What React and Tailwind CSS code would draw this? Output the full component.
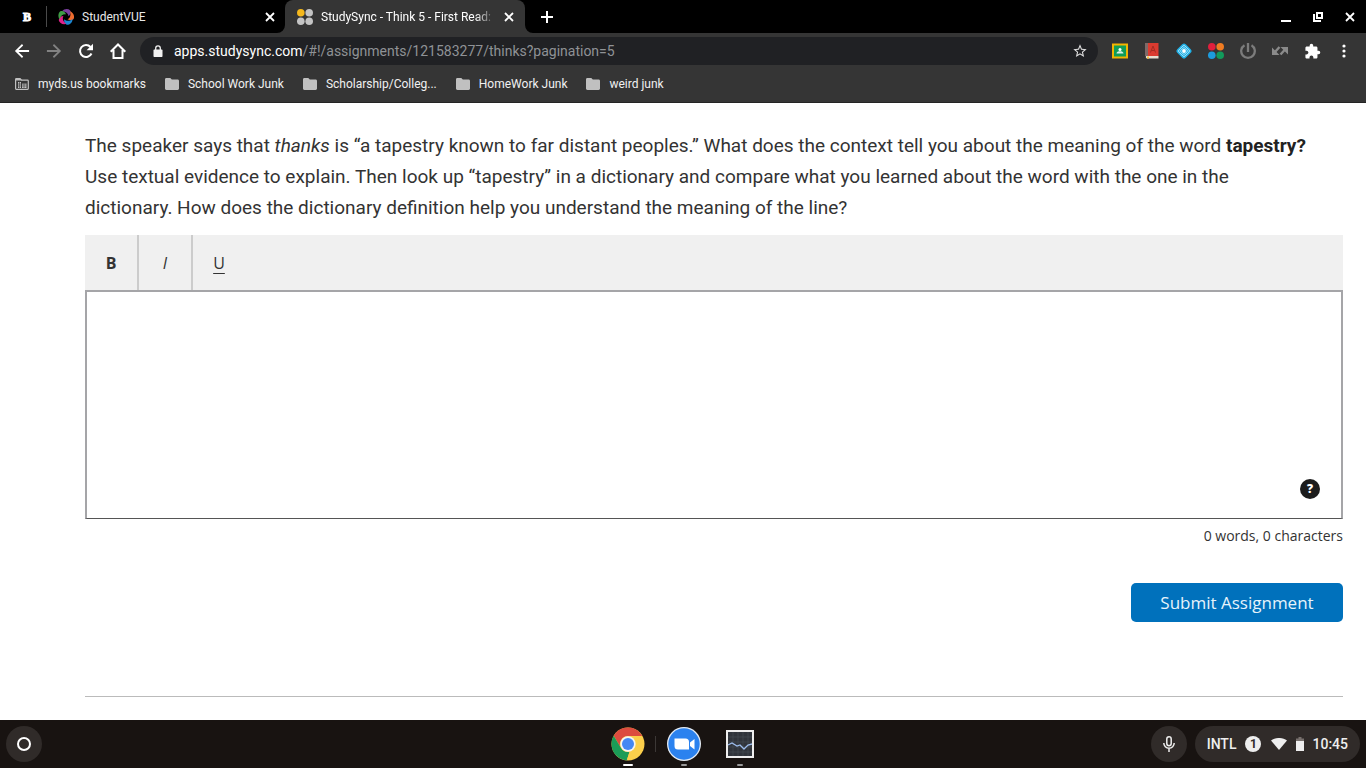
import React, { useState } from "react";

const bookmarks = [
  "School Work Junk",
  "Scholarship/Colleg...",
  "HomeWork Junk",
  "weird junk",
];

const MaterialIcon = ({ d, className = "size-5" }) => (
  <svg viewBox="0 0 24 24" fill="currentColor" className={className}>
    <path d={d} />
  </svg>
);

const CloseIcon = () => (
  <svg viewBox="0 0 10 10" className="size-2.5" stroke="currentColor" strokeWidth="1.8">
    <path d="M1 1l8 8M9 1l-8 8" />
  </svg>
);

const FourDots = ({ colors }) => (
  <svg viewBox="0 0 16 16" className="size-4 shrink-0">
    <circle cx="3.8" cy="3.8" r="3.8" fill={colors[0]} />
    <circle cx="12.2" cy="3.8" r="3.8" fill={colors[1]} />
    <circle cx="3.8" cy="12.2" r="3.8" fill={colors[2]} />
    <circle cx="12.2" cy="12.2" r="3.8" fill={colors[3]} />
  </svg>
);

const StudentVueIcon = () => (
  <svg viewBox="0 0 16 16" className="size-4 shrink-0">
    {["#7b3fa0", "#ef6c2f", "#1c86d1", "#e0218a", "#3f9c46"].map((color, i) => (
      <path
        key={color}
        d="M3.800 2.600C6-.4 10-.6 12 1.200 13.400 3.200 12.600 5.600 10.600 7.200 10.200 4.200 7.500 2.400 3.800 2.600z"
        fill={color}
        transform={`rotate(${i * 72} 8 8)`}
      />
    ))}
  </svg>
);

const FolderIcon = () => (
  <svg viewBox="0 0 14 12" className="h-3 w-3.5 shrink-0" fill="#c0c0c0">
    <path d="M1.400 0h3.900l1.500 1.500h5.800c.8 0 1.400.6 1.400 1.400v7.700c0 .8-.6 1.400-1.400 1.400H1.400C.6 12 0 11.400 0 10.600V1.400C0 .6.600 0 1.400 0z" />
  </svg>
);

const ManagedFolderIcon = () => (
  <svg viewBox="0 0 14 12" className="h-3 w-3.5 shrink-0">
    <path
      d="M1.300.6h3.800l1.500 1.500h5.900c.4 0 .8.400.8.800v7.700c0 .4-.4.800-.8.800H1.300c-.4 0-.7-.4-.7-.8V1.400c0-.4.300-.8.700-.8z"
      fill="none"
      stroke="#c0c0c0"
      strokeWidth="1.200"
    />
    <path d="M.6 1h5l1.200 1.500H.6z" fill="#c0c0c0" />
    <path d="M3 4h3v6H3zM7 5.500h4.500V10H7z" fill="#c0c0c0" />
    <path d="M4.500 4v6M3 6h8.500M3 8h8.500M9 5.500V10" stroke="#353535" strokeWidth=".6" />
  </svg>
);

const TabStrip = () => (
  <header className="flex h-[33px] items-stretch bg-black text-xs text-[#e8e8e8]">
    <button aria-label="Pinned tab" className="my-1.5 flex w-[47px] items-center justify-center border-r border-[#4a4a4a] pl-2">
      <span className="font-['Liberation_Serif',serif] text-xs font-bold text-white [-webkit-text-stroke:1px_white]">
        B
      </span>
    </button>
    <div className="flex w-[238px] items-center gap-2 pr-2.5 pl-[11px]">
      <StudentVueIcon />
      <span className="flex-1">StudentVUE</span>
      <button aria-label="Close StudentVUE" className="text-white">
        <CloseIcon />
      </button>
    </div>
    <div className="relative flex w-[240px] items-center gap-2 rounded-t-lg bg-[#353535] pr-[11px] pl-3">
      <svg viewBox="0 0 8 8" className="absolute bottom-0 -left-2 size-2" fill="#353535">
        <path d="M8 0v8H0a8 8 0 0 0 8-8z" />
      </svg>
      <svg viewBox="0 0 8 8" className="absolute -right-2 bottom-0 size-2" fill="#353535">
        <path d="M0 0v8h8a8 8 0 0 1-8-8z" />
      </svg>
      <FourDots colors={["#f5b81c", "#c4c4c4", "#c4c4c4", "#c4c4c4"]} />
      <span className="flex-1 overflow-hidden whitespace-nowrap text-white [mask-image:linear-gradient(to_right,black_88%,transparent)]">
        StudySync - Think 5 - First Read:
      </span>
      <button aria-label="Close StudySync" className="text-white">
        <CloseIcon />
      </button>
    </div>
    <button aria-label="New tab" className="ml-4 text-white">
      <svg viewBox="0 0 12 12" className="size-3" stroke="currentColor" strokeWidth="2">
        <path d="M6 0v12M0 6h12" />
      </svg>
    </button>
    <div className="ml-auto flex items-center gap-5 pr-2.5 text-white">
      <button aria-label="Minimize">
        <svg viewBox="0 0 12 12" className="size-3" stroke="currentColor" strokeWidth="2">
          <path d="M1 10h10" />
        </svg>
      </button>
      <button aria-label="Restore">
        <svg viewBox="0 0 12 12" className="size-3" fill="none" stroke="currentColor" strokeWidth="2">
          <path d="M5 2h5v5H5z" />
          <path d="M2 3v7h7" />
        </svg>
      </button>
      <button aria-label="Close window" className="flex w-3 justify-center">
        <CloseIcon />
      </button>
    </div>
  </header>
);

const Extensions = () => (
  <div className="flex items-center text-white">
    <button aria-label="Classroom" className="flex w-8 justify-center">
      <svg viewBox="0 0 16 16" className="size-4">
        <path d="M0 .5h16v15H0z" fill="#f4b400" />
        <path d="M2 2.500h12v11H2z" fill="#0f9d58" />
        <circle cx="8" cy="6.500" r="1.500" fill="#fff" />
        <path d="M4.500 10.500c0-1.700 1.800-2.200 3.500-2.200s3.500.5 3.500 2.200z" fill="#d8f0e4" />
      </svg>
    </button>
    <button aria-label="Dictionary" className="flex w-8 justify-center">
      <svg viewBox="0 0 16 16" className="size-4">
        <path d="M1 0H14.500v13H1z" fill="#db3b30" />
        <path d="M1 0H4v13H1z" fill="#7d6a68" />
        <path d="M2 13H14.500v2.500H3c-1 0-1.500-1-1-2.500z" fill="#e8ded0" />
        <path d="M6.500 9.500L9 3l2.500 6.500M7.500 7.500h3" stroke="#a52c22" fill="none" />
        <path d="M3 13.500v2.500l1-.8 1 .8v-2.500z" fill="#f6c344" />
      </svg>
    </button>
    <button aria-label="Layers" className="flex w-8 justify-center">
      <svg viewBox="0 0 16 16" className="size-4">
        <rect x="2" y="2" width="12" height="12" rx="2.500" fill="#1fb0e6" transform="rotate(45 8 8)" />
        <g fill="none" stroke="#bdeaf9" strokeWidth=".8" transform="rotate(45 8 8)">
          <rect x="3.700" y="3.700" width="8.600" height="8.600" rx="1.500" />
          <rect x="5.300" y="5.300" width="5.400" height="5.400" rx="1" />
        </g>
        <circle cx="8" cy="8" r="1.900" fill="#fff" />
      </svg>
    </button>
    <button aria-label="Clever" className="flex w-8 justify-center">
      <FourDots colors={["#e21f3d", "#f07c22", "#1d9bdc", "#129a5b"]} />
    </button>
    <button aria-label="Power" className="flex w-8 justify-center text-[#7c7c7c]">
      <svg viewBox="0 0 16 16" className="size-4" fill="none" stroke="currentColor" strokeWidth="2.300">
        <path d="M4.500 2.200A6.800 6.800 0 1 0 11.500 2.200M8 0v9" />
      </svg>
    </button>
    <button aria-label="Resize" className="flex w-8 justify-center text-[#8a8a8a]">
      <svg viewBox="0 0 16 16" className="size-4" fill="none" stroke="currentColor" strokeWidth="2.400">
        <path d="M7.500 4L2.500 9.500M8.500 11.500l5-5.500" />
        <path d="M0 4.500V12h7.500zM16 11.500V4H8.500z" fill="currentColor" stroke="none" />
      </svg>
    </button>
    <button aria-label="Extensions" className="flex w-8 justify-center">
      <MaterialIcon
        className="size-[17px]"
        d="M20.500 11H19V7c0-1.100-.9-2-2-2h-4V3.500a2.500 2.500 0 0 0-5 0V5H4c-1.100 0-1.990.9-1.990 2v3.800H3.500c1.490 0 2.700 1.210 2.700 2.700s-1.210 2.700-2.700 2.700H2V20c0 1.100.9 2 2 2h3.800v-1.500c0-1.490 1.210-2.700 2.700-2.700s2.700 1.210 2.700 2.700V22H17c1.100 0 2-.9 2-2v-4h1.500a2.500 2.500 0 0 0 0-5z"
      />
    </button>
    <button aria-label="Menu" className="flex w-8 justify-center">
      <svg viewBox="0 0 4 14" className="h-3.5 w-1" fill="currentColor">
        <circle cx="2" cy="2" r="1.600" />
        <circle cx="2" cy="7" r="1.600" />
        <circle cx="2" cy="12" r="1.600" />
      </svg>
    </button>
  </div>
);

const Toolbar = () => (
  <div className="flex h-9 items-center bg-[#353535] pr-1.5 pl-1.5 text-white">
    <button aria-label="Back" className="flex w-8 justify-center">
      <MaterialIcon d="M20.500 10.700H7.830l5.590-5.290L12 3.500l-8.500 8.500 8.500 8.500 1.410-1.910L7.830 13.300H20.500v-2.600z" />
    </button>
    <button aria-label="Forward" className="flex w-8 justify-center text-[#828282]">
      <MaterialIcon d="M12 3.500l-1.410 1.910 5.580 5.290H3.500v2.600h12.670l-5.580 5.290L12 20.500l8.500-8.500z" />
    </button>
    <button aria-label="Reload" className="flex w-8 justify-center">
      <svg viewBox="0 0 16 16" className="size-4" fill="none" stroke="currentColor" strokeWidth="2">
        <path d="M13.500 10.500A6 6 0 1 1 12.500 4" />
        <path d="M15 .8v6.400H8.600z" fill="currentColor" stroke="none" />
      </svg>
    </button>
    <button aria-label="Home" className="flex w-8 justify-center">
      <svg viewBox="0 0 16 16" className="size-4" fill="none" stroke="currentColor" strokeWidth="2">
        <path d="M.7 8.800L8 1.500l7.300 7.300M3.500 7v8h9V7" />
      </svg>
    </button>
    <div className="ml-1.5 flex h-7 flex-1 items-center rounded-full bg-[#202124] pr-2.5 pl-3">
      <svg viewBox="0 0 12 12" className="size-3 shrink-0" fill="#f1f1f1">
        <path d="M2.500 4.500h7c.6 0 1 .4 1 1V11c0 .6-.4 1-1 1h-7c-.6 0-1-.4-1-1V5.500c0-.6.400-1 1-1z" />
        <path d="M3.700 5V3.200a2.300 2.300 0 0 1 4.600 0V5" fill="none" stroke="#f1f1f1" strokeWidth="1.300" />
      </svg>
      <div className="ml-2.5 flex-1 text-sm text-[#8f9296]">
        <span className="text-white">apps.studysync.com</span>
        /#!/assignments/121583277/thinks?pagination=5
      </div>
      <button aria-label="Bookmark this page" className="text-[#e0e0e0]">
        <MaterialIcon
          className="size-4"
          d="M22 9.240l-7.190-.62L12 2 9.190 8.630 2 9.240l5.460 4.730L5.820 21 12 17.270 18.180 21l-1.630-7.030L22 9.240zM12 15.400l-3.760 2.270 1-4.280-3.320-2.880 4.380-.38L12 6.100l1.710 4.040 4.380.38-3.320 2.880 1 4.280L12 15.400z"
        />
      </button>
    </div>
    <div className="ml-1.5">
      <Extensions />
    </div>
  </div>
);

const BookmarksBar = () => (
  <nav className="flex h-[34px] items-center gap-[19px] border-b border-[#242424] bg-[#353535] pb-1 pl-[15px] text-xs text-[#f1f1f1]">
    <a href="#managed" className="flex items-center gap-[9px]">
      <ManagedFolderIcon />
      myds.us bookmarks
    </a>
    {bookmarks.map((name) => (
      <a key={name} href="#folder" className="flex items-center gap-[9px]">
        <FolderIcon />
        {name}
      </a>
    ))}
  </nav>
);

const AnswerForm = () => {
  const [answer, setAnswer] = useState("");
  const words = answer.trim() ? answer.trim().split(/\s+/).length : 0;

  return (
    <form
      onSubmit={(e) => e.preventDefault()}
      className="flex flex-1 flex-col bg-white pt-[27px] pr-[23px] pl-[85px] font-['Open_Sans',sans-serif] text-[#333]"
    >
      <label htmlFor="answer" className="block font-[Roboto,sans-serif] text-[19px] leading-[31px]">
        The speaker says that <em>thanks</em> is “a tapestry known to far distant
        peoples.” What does the context tell you about the meaning of the word{" "}
        <strong className="font-bold text-[#222]">tapestry?</strong>
        <br />
        Use textual evidence to explain. Then look up “tapestry” in a dictionary
        and compare what you learned about the word with the one in the
        <br />
        dictionary. How does the dictionary definition help you understand the
        meaning of the line?
      </label>
      <div className="mt-3 flex h-[55px] bg-[#f0f0f0] text-base">
        <button type="button" className="w-[54px] border-r-2 border-[#ccc] font-bold">
          B
        </button>
        <button type="button" className="w-[54px] border-r-2 border-[#ccc] italic">
          I
        </button>
        <button type="button" className="w-[52px] underline underline-offset-4">
          U
        </button>
      </div>
      <div className="relative">
        <textarea
          id="answer"
          value={answer}
          onChange={(e) => setAnswer(e.target.value)}
          className="block h-[229px] w-full resize-none border-2 border-b border-[#a5a5a8] border-b-[#555] p-3 outline-none"
        />
        <button
          type="button"
          aria-label="Help"
          className="absolute right-[23px] bottom-5 flex size-5 items-center justify-center rounded-full bg-[#1c1c1c] text-xs font-extrabold text-white"
        >
          ?
        </button>
      </div>
      <p className="mt-[7px] text-right text-sm leading-5">
        {words} words, {answer.length} characters
      </p>
      <button
        type="submit"
        className="mt-[37px] h-[39px] w-[212px] self-end rounded-[5px] bg-[#0071bc] text-[17px] text-[#e6f3fb]"
      >
        Submit Assignment
      </button>
      <hr className="mt-[74px] border-[#bbb]" />
    </form>
  );
};

const ChromeLogo = () => (
  <svg viewBox="0 0 34 34" className="size-[34px]">
    <circle cx="17" cy="17" r="16.500" fill="#fbcf4b" />
    <path d="M17 .5a16.500 16.500 0 0 1 14.300 8.500H17a8 8 0 0 0-7 12L2.700 8.700A16.500 16.500 0 0 1 17 .5z" fill="#dc4c3f" />
    <path d="M2.700 8.700L10 21a8 8 0 0 0 8.500 3.900L15.700 33.400A16.500 16.500 0 0 1 2.700 8.700z" fill="#1a9c57" />
    <path d="M24 21l-8.300 12.400 2.800-8.500z" fill="#fbcf4b" />
    <circle cx="17" cy="17" r="7.700" fill="#f4f4f4" />
    <circle cx="17" cy="17" r="6" fill="#4587f3" />
  </svg>
);

const ZoomLogo = () => (
  <svg viewBox="0 0 34 34" className="size-[34px]">
    <circle cx="17" cy="17" r="17" fill="#e4ecf5" />
    <circle cx="17" cy="17" r="15.700" fill="#2b82ef" />
    <path d="M7.500 11.500h11a3.500 3.500 0 0 1 3.500 3.500v7.500H11A3.500 3.500 0 0 1 7.500 19zM23 15.500l4.500-3.500v10.500L23 19z" fill="#fff" />
  </svg>
);

const ActivityLogo = () => (
  <svg viewBox="0 0 28 28" className="size-7">
    <path d="M1 1h26v26H1z" fill="#30343b" stroke="#eee" strokeWidth="2" />
    <path d="M7 2v24M12 2v24M17 2v24M22 2v24M2 7h24M2 12h24M2 17h24M2 22h24" stroke="#484d55" strokeWidth=".6" />
    <path d="M2 15l4-2 5 3 3-1 4 4 4-4 4-1" stroke="#9cbcec" strokeWidth="1.300" fill="none" />
  </svg>
);

const Shelf = () => (
  <footer className="grid h-12 grid-cols-[1fr_auto_1fr] items-center bg-[#181311] text-white">
    <button aria-label="Launcher" className="ml-1.5 flex size-9 items-center justify-center rounded-full bg-[#302b29]">
      <span className="size-3.5 rounded-full border-2 border-white" />
    </button>
    <div className="flex h-12 items-stretch pl-0.5">
      <button aria-label="Chrome" className="flex w-[54px] flex-col items-center justify-between pt-[7px] pb-0.5">
        <ChromeLogo />
        <span className="h-0.5 w-2.5 rounded-full bg-white" />
      </button>
      <span className="my-4 w-px bg-[#3c3836]" />
      <button aria-label="Zoom" className="flex w-14 flex-col items-center justify-between pt-[7px] pb-0.5">
        <ZoomLogo />
        <span className="h-0.5 w-1.5 rounded-full bg-[#999]" />
      </button>
      <button aria-label="Diagnostics" className="flex w-14 flex-col items-center justify-between pt-2.5 pb-0.5">
        <ActivityLogo />
        <span className="h-0.5 w-1.5 rounded-full bg-[#999]" />
      </button>
    </div>
    <div className="flex items-center gap-2 justify-self-end pr-1.5">
      <button aria-label="Dictation" className="flex size-9 items-center justify-center rounded-full bg-[#302b29] text-[#eee]">
        <svg viewBox="0 0 14 18" className="h-[18px] w-3.5" fill="none" stroke="currentColor" strokeWidth="1.500">
          <rect x="4.800" y="1.800" width="4.400" height="9" rx="2.200" />
          <path d="M1.800 8a5.200 5.200 0 0 0 10.400 0M7 13.200V17" />
        </svg>
      </button>
      <button className="flex h-9 items-center rounded-full bg-[#302b29] px-3 text-sm font-medium text-[#eee]">
        INTL
        <span className="ml-[9px] flex size-4 items-center justify-center rounded-full bg-[#eee] text-xs font-bold text-[#302b29]">
          1
        </span>
        <svg viewBox="0 0 16 12" className="ml-2.5 h-3 w-4" fill="currentColor">
          <path d="M0 2.600C4.500-.9 11.500-.9 16 2.600L8 12z" />
        </svg>
        <svg viewBox="0 0 8 14" className="ml-[9px] h-3.5 w-2" fill="currentColor">
          <path d="M2.500 0h3v1.500H8V5H0V1.500h2.500z" fill="#77706d" />
          <path d="M0 4h8v10H0z" />
        </svg>
        <span className="ml-2">10:45</span>
      </button>
    </div>
  </footer>
);

const App = () => {
  return (
    <div className="flex min-h-screen flex-col font-[Roboto,sans-serif]">
      <TabStrip />
      <Toolbar />
      <BookmarksBar />
      <AnswerForm />
      <Shelf />
    </div>
  );
};

export default App;
